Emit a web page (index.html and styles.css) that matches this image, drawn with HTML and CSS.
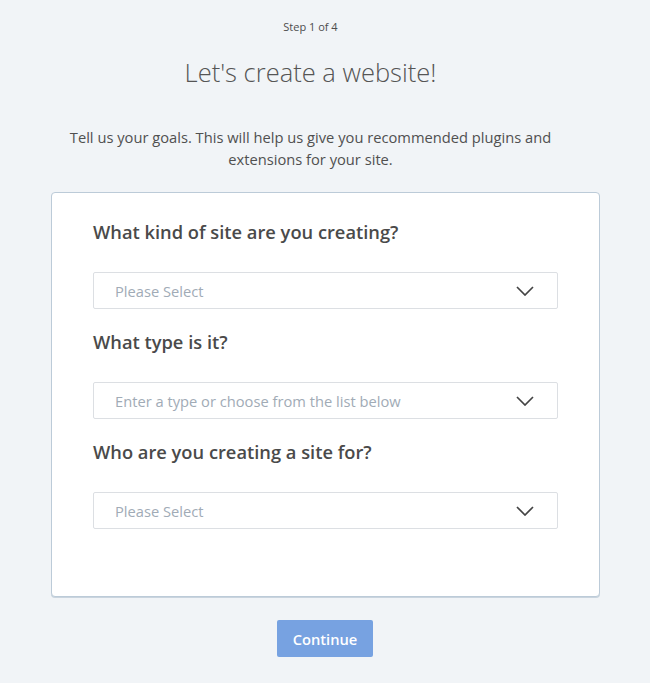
FILE: index.html
```html
<!DOCTYPE html>
<html lang="en">
<head>
<meta charset="utf-8">
<title>Let's create a website!</title>
<link rel="stylesheet" href="styles.css">
</head>
<body>
<main class="page">
  <header class="head">
    <p class="step">Step 1 of 4</p>
    <h1 class="title">Let's create a website!</h1>
    <p class="intro">Tell us your goals. This will help us give you recommended plugins and extensions for your site.</p>
  </header>
  <section class="card">
    <div class="field">
      <h2 class="label">What kind of site are you creating?</h2>
      <div class="select">
        <span class="placeholder">Please Select</span>
        <svg class="chevron" width="18" height="10" viewBox="0 0 18 10"><path d="M1 1l8 8 8-8" fill="none" stroke="#444" stroke-width="1.7"/></svg>
      </div>
    </div>
    <div class="field">
      <h2 class="label">What type is it?</h2>
      <div class="select">
        <span class="placeholder">Enter a type or choose from the list below</span>
        <svg class="chevron" width="18" height="10" viewBox="0 0 18 10"><path d="M1 1l8 8 8-8" fill="none" stroke="#444" stroke-width="1.7"/></svg>
      </div>
    </div>
    <div class="field">
      <h2 class="label">Who are you creating a site for?</h2>
      <div class="select">
        <span class="placeholder">Please Select</span>
        <svg class="chevron" width="18" height="10" viewBox="0 0 18 10"><path d="M1 1l8 8 8-8" fill="none" stroke="#444" stroke-width="1.7"/></svg>
      </div>
    </div>
  </section>
  <div class="actions">
    <button class="continue" type="button">Continue</button>
  </div>
</main>
</body>
</html>
```

FILE: styles.css
```css
html, body {
  margin: 0;
  padding: 0;
  background: #f1f4f7;
}
body {
  font-family: "Open Sans", "Noto Sans", sans-serif;
  color: #4a4a4a;
}
.page {
  width: 650px;
  padding-top: 20px;
  display: flex;
  flex-direction: column;
  align-items: center;
}
.head {
  align-self: flex-start;
  width: 621px;
  display: flex;
  flex-direction: column;
  align-items: center;
}
.step {
  margin: 0;
  font-size: 11px;
  line-height: 14px;
  color: #4d4d4d;
}
.title {
  margin: 20px 0 0;
  font-size: 25.5px;
  line-height: 36px;
  font-weight: 300;
  color: #555;
}
.intro {
  margin: 36px 0 0;
  width: 520px;
  text-align: center;
  font-size: 14.7px;
  line-height: 22px;
  color: #505050;
}
.card {
  box-sizing: border-box;
  margin-top: 22px;
  margin-left: 1px;
  width: 549px;
  height: 405px;
  background: #fff;
  border: 1px solid #bccbd8;
  border-radius: 4px;
  box-shadow: 0 1px 0 #c9d4de;
  padding: 21px 41px 0;
  display: flex;
  flex-direction: column;
}
.field {
  display: flex;
  flex-direction: column;
}
.label {
  margin: 0;
  font-size: 18.3px;
  line-height: 36px;
  font-weight: 600;
  color: #4a4a4a;
}
.select {
  box-sizing: border-box;
  margin-top: 22px;
  margin-bottom: 15px;
  height: 37px;
  border: 1px solid #dcdfe3;
  border-radius: 2px;
  display: flex;
  align-items: center;
  justify-content: space-between;
  padding: 0 23px 0 21px;
}
.placeholder {
  font-size: 14.7px;
  color: #a1abb6;
}
.chevron {
  display: block;
}
.actions {
  margin-top: 23px;
}
.continue {
  width: 96px;
  height: 37px;
  border: 0;
  border-radius: 2px;
  background: #77a2e1;
  color: #fff;
  font-family: "Open Sans", "Noto Sans", sans-serif;
  font-size: 14.7px;
  font-weight: 600;
  cursor: pointer;
}
```
